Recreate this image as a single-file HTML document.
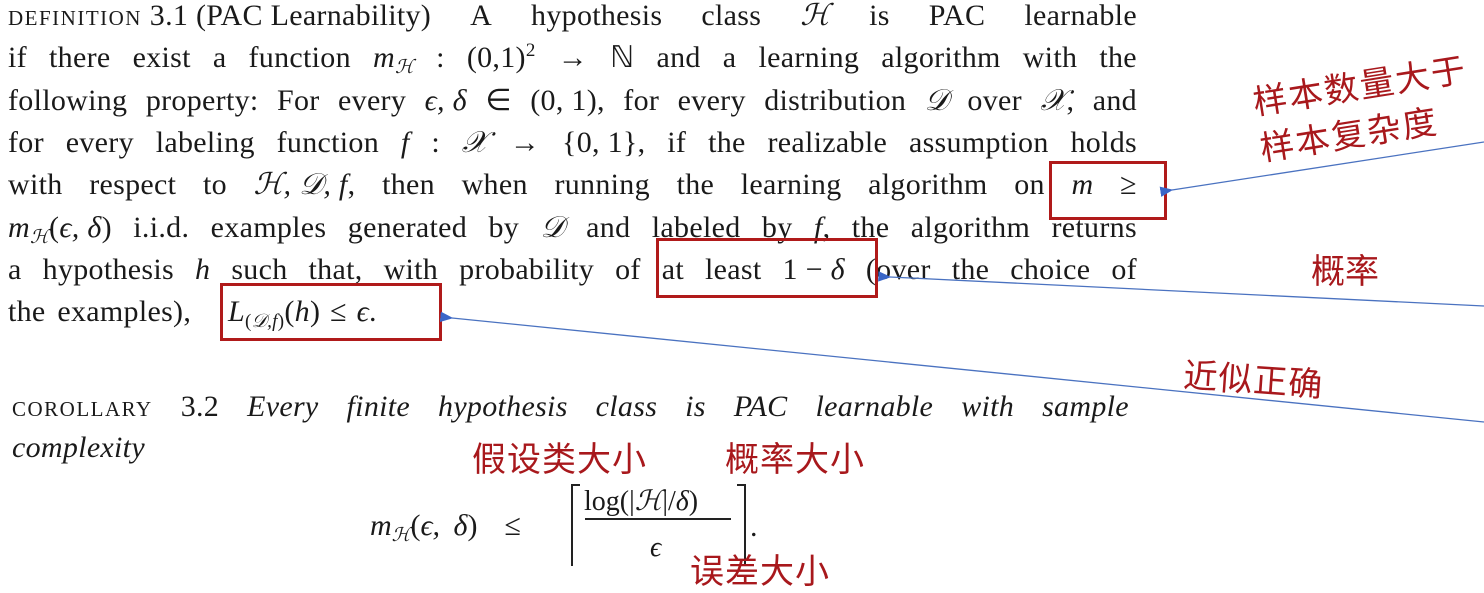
<!DOCTYPE html>
<html><head><meta charset="utf-8"><style>
body{margin:0;width:1484px;height:591px;background:#fff;position:relative;overflow:hidden;font-family:"Liberation Serif",serif;color:#1a1a1a}
.l{position:absolute;left:8px;width:1129px;font-size:30px;line-height:34px;white-space:nowrap;letter-spacing:0.3px}
.j{display:flex;justify-content:space-between}
i{font-style:italic}
.sc{font-variant:small-caps;letter-spacing:1.5px}
sub{font-size:19px;vertical-align:-6px;line-height:0}
sup{font-size:19px;line-height:0}
.box{position:absolute;border:3.5px solid #b01a1a;box-sizing:border-box}
.cn{position:absolute;color:#a8181c;font-family:"Noto Sans CJK SC",sans-serif;font-size:34px;line-height:38px;white-space:nowrap}
</style></head><body>
<div class="l" style="top:-1px"><span class="j"><span><span class="sc">definition</span> 3.1 (PAC Learnability)</span><span>A</span><span>hypothesis</span><span>class</span><span><i>ℋ</i></span><span>is</span><span>PAC</span><span>learnable</span></span></div>
<div class="l" style="top:41px"><span class="j"><span>if</span><span>there</span><span>exist</span><span>a</span><span>function</span><span><i>m</i><sub><i>ℋ</i></sub></span><span>:</span><span>(0,1)<sup>2</sup></span><span>→</span><span>ℕ</span><span>and</span><span>a</span><span>learning</span><span>algorithm</span><span>with</span><span>the</span></span></div>
<div class="l" style="top:84px"><span class="j"><span>following</span><span>property:</span><span>For</span><span>every</span><span><i>ϵ, δ</i></span><span>∈</span><span>(0, 1),</span><span>for</span><span>every</span><span>distribution</span><span><i>𝒟</i></span><span>over</span><span><i>𝒳</i>,</span><span>and</span></span></div>
<div class="l" style="top:126px"><span class="j"><span>for</span><span>every</span><span>labeling</span><span>function</span><span><i>f</i></span><span>:</span><span><i>𝒳</i></span><span>→</span><span>{0, 1},</span><span>if</span><span>the</span><span>realizable</span><span>assumption</span><span>holds</span></span></div>
<div class="l" style="top:168px"><span class="j"><span>with</span><span>respect</span><span>to</span><span><i>ℋ, 𝒟, f</i>,</span><span>then</span><span>when</span><span>running</span><span>the</span><span>learning</span><span>algorithm</span><span>on</span><span><i>m</i></span><span>≥</span></span></div>
<div class="l" style="top:211px"><span class="j"><span><i>m</i><sub><i>ℋ</i></sub>(<i>ϵ, δ</i>)</span><span>i.i.d.</span><span>examples</span><span>generated</span><span>by</span><span><i>𝒟</i></span><span>and</span><span>labeled</span><span>by</span><span><i>f</i>,</span><span>the</span><span>algorithm</span><span>returns</span></span></div>
<div class="l" style="top:253px"><span class="j"><span>a</span><span>hypothesis</span><span><i>h</i></span><span>such</span><span>that,</span><span>with</span><span>probability</span><span>of</span><span>at</span><span>least</span><span>1 − <i>δ</i></span><span>(over</span><span>the</span><span>choice</span><span>of</span></span></div>
<div class="l" style="top:295px;word-spacing:4px">the examples),</div>
<div class="l" style="top:295px;left:228px;word-spacing:2px"><i>L</i><sub>(<i>𝒟,f</i>)</sub>(<i>h</i>) ≤ <i>ϵ</i>.</div>
<div class="l" style="top:390px;left:12px;width:1117px"><span class="j"><span class="sc">corollary</span><span>3.2</span><i>Every</i><i>finite</i><i>hypothesis</i><i>class</i><i>is</i><i>PAC</i><i>learnable</i><i>with</i><i>sample</i></span></div>
<div class="l" style="top:431px;left:12px"><i>complexity</i></div>
<div style="position:absolute;left:370px;top:509px;font-size:30px;line-height:34px;word-spacing:6px"><i>m</i><sub><i>ℋ</i></sub>(<i>ϵ, δ</i>) &nbsp;≤</div>
<div style="position:absolute;left:571px;top:484px;width:2px;height:82px;background:#222"></div>
<div style="position:absolute;left:571px;top:484px;width:9px;height:2px;background:#222"></div>
<div style="position:absolute;left:744px;top:484px;width:2px;height:82px;background:#222"></div>
<div style="position:absolute;left:737px;top:484px;width:9px;height:2px;background:#222"></div>
<div style="position:absolute;left:584px;top:486px;font-size:28px;line-height:32px">log(|<i>ℋ</i>|/<i>δ</i>)</div>
<div style="position:absolute;left:585px;top:518px;width:146px;height:1.5px;background:#222"></div>
<div style="position:absolute;left:650px;top:532px;font-size:28px;line-height:32px"><i>ϵ</i></div>
<div style="position:absolute;left:750px;top:510px;font-size:30px;line-height:34px">.</div>
<div class="box" style="left:1049px;top:161px;width:118px;height:59px"></div>
<div class="box" style="left:656px;top:238px;width:222px;height:60px"></div>
<div class="box" style="left:220px;top:283px;width:222px;height:58px"></div>
<svg style="position:absolute;left:0;top:0" width="1484" height="591">
<defs><marker id="a" markerWidth="10" markerHeight="8" refX="1" refY="4" orient="auto"><path d="M10,0 L0,4 L10,8z" fill="#3a66c8"/></marker></defs>
<g stroke="#4a72c0" stroke-width="1.3" fill="none">
<line x1="1484" y1="142" x2="1172" y2="190" marker-end="url(#a)"/>
<line x1="1484" y1="306" x2="890" y2="277" marker-end="url(#a)"/>
<line x1="1484" y1="422" x2="452" y2="318" marker-end="url(#a)"/>
</g></svg>
<div class="cn" style="left:1250px;top:82px;transform:rotate(-9deg);transform-origin:left top;letter-spacing:2px">样本数量大于</div>
<div class="cn" style="left:1257px;top:128px;transform:rotate(-9deg);transform-origin:left top;letter-spacing:2px">样本复杂度</div>
<div class="cn" style="left:1311px;top:250px">概率</div>
<div class="cn" style="left:1185px;top:354px;transform:rotate(4deg);transform-origin:left top;letter-spacing:1px">近似正确</div>
<div class="cn" style="left:472px;top:438px;letter-spacing:1px">假设类大小</div>
<div class="cn" style="left:725px;top:438px;letter-spacing:1px">概率大小</div>
<div class="cn" style="left:690px;top:550px;letter-spacing:1px">误差大小</div>
</body></html>
